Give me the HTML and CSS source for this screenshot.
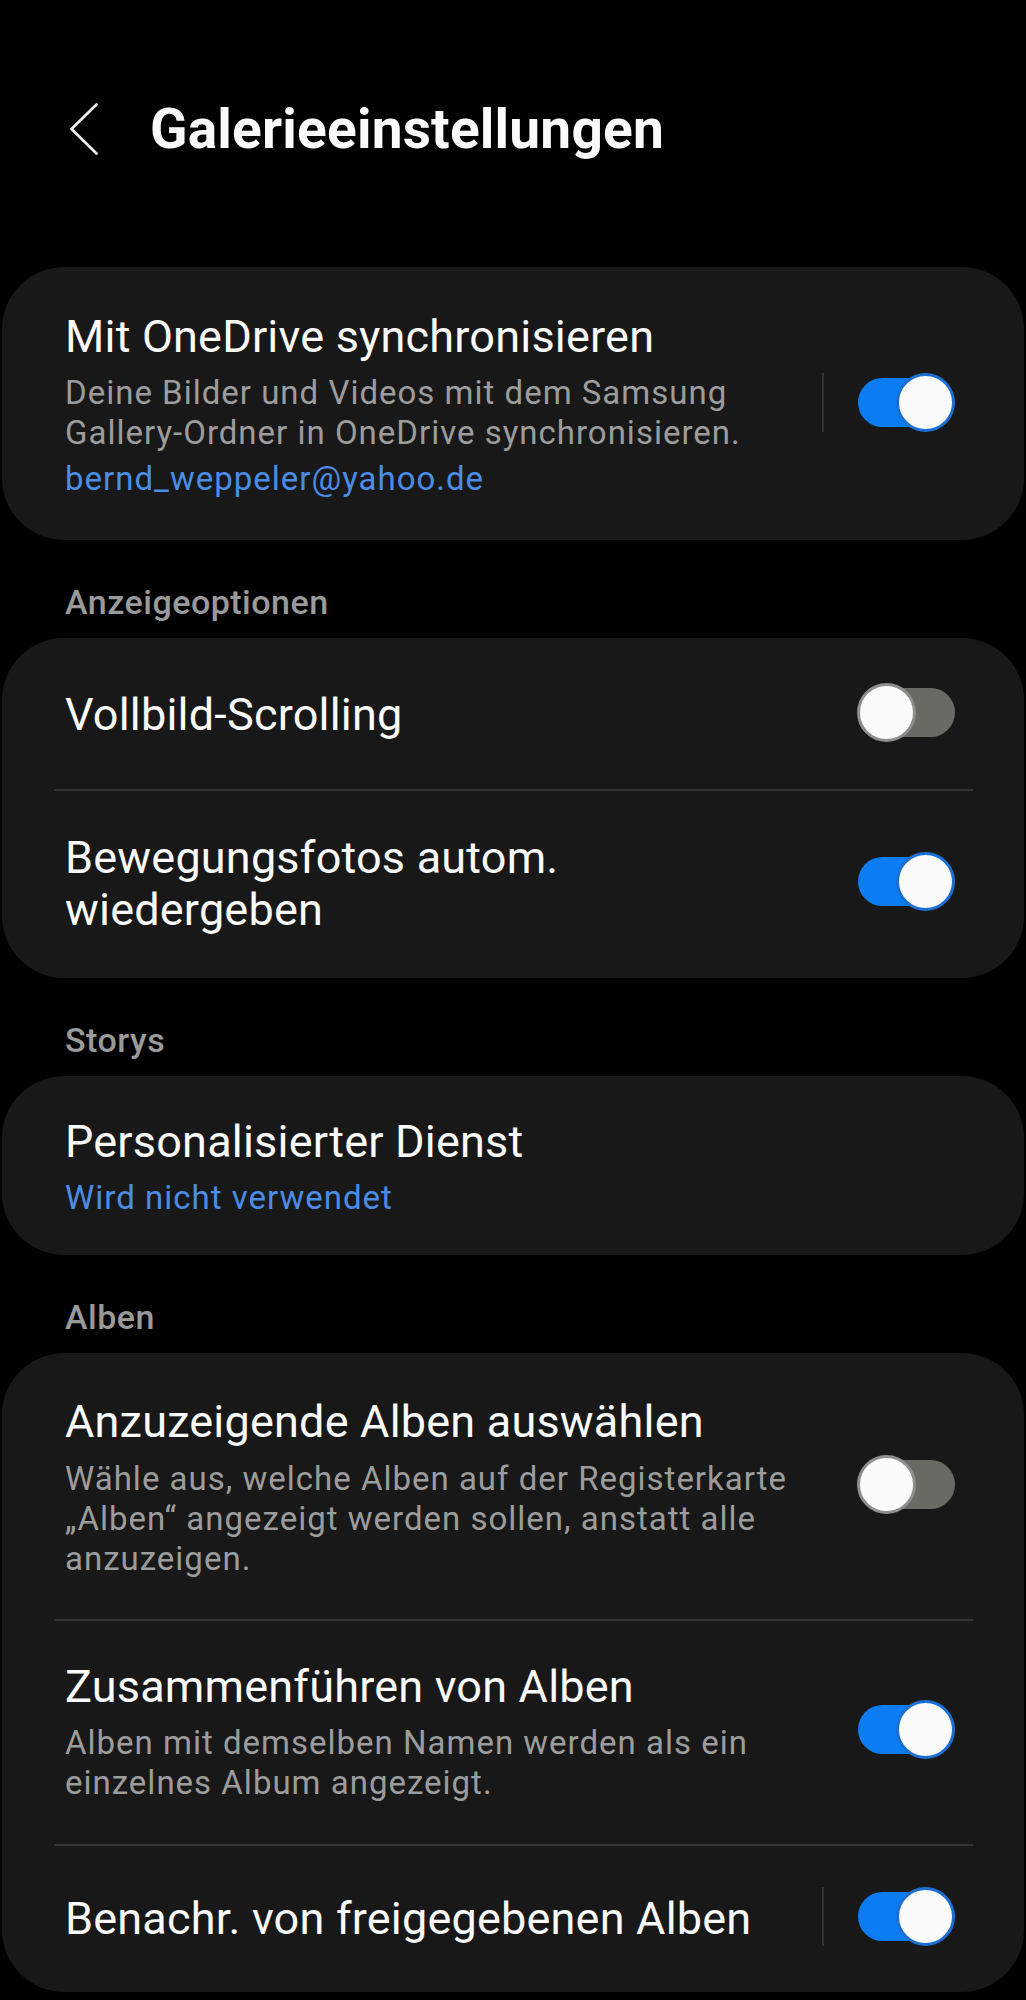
FILE: index.html
```html
<!DOCTYPE html>
<html lang="de">
<head>
<meta charset="utf-8">
<title>Galerieeinstellungen</title>
<link rel="stylesheet" href="styles.css">
</head>
<body>
<div class="screen">
  <header class="appbar">
    <svg class="back" width="28" height="52" viewBox="0 0 28 52" aria-hidden="true">
      <polyline points="26.5,1.5 1.5,26 26.5,50.5" fill="none" stroke="#f2f2f2" stroke-width="2.6" stroke-linecap="round" stroke-linejoin="round"/>
    </svg>
    <h1 class="page-title">Galerieeinstellungen</h1>
  </header>

  <section class="card">
    <div class="row has-sep row-sync">
      <div class="text">
        <div class="title">Mit OneDrive synchronisieren</div>
        <div class="sub">Deine Bilder und Videos mit dem Samsung<br>Gallery-Ordner in OneDrive synchronisieren.</div>
        <div class="link link-email">bernd_weppeler@yahoo.de</div>
      </div>
      <div class="sep"></div>
      <div class="toggle on"><span class="track"></span><span class="thumb"></span></div>
    </div>
  </section>

  <h2 class="group">Anzeigeoptionen</h2>
  <section class="card">
    <div class="row row-a1">
      <div class="text"><div class="title">Vollbild-Scrolling</div></div>
      <div class="toggle off"><span class="track"></span><span class="thumb"></span></div>
    </div>
    <div class="divider"></div>
    <div class="row row-a2">
      <div class="text"><div class="title">Bewegungsfotos autom.<br>wiedergeben</div></div>
      <div class="toggle on"><span class="track"></span><span class="thumb"></span></div>
    </div>
  </section>

  <h2 class="group">Storys</h2>
  <section class="card">
    <div class="row row-s1">
      <div class="text">
        <div class="title">Personalisierter Dienst</div>
        <div class="link">Wird nicht verwendet</div>
      </div>
    </div>
  </section>

  <h2 class="group">Alben</h2>
  <section class="card">
    <div class="row row-b1">
      <div class="text">
        <div class="title">Anzuzeigende Alben auswählen</div>
        <div class="sub sub-b1">Wähle aus, welche Alben auf der Registerkarte<br>„Alben“ angezeigt werden sollen, anstatt alle<br>anzuzeigen.</div>
      </div>
      <div class="toggle off"><span class="track"></span><span class="thumb"></span></div>
    </div>
    <div class="divider"></div>
    <div class="row row-b2">
      <div class="text">
        <div class="title">Zusammenführen von Alben</div>
        <div class="sub">Alben mit demselben Namen werden als ein<br>einzelnes Album angezeigt.</div>
      </div>
      <div class="toggle on"><span class="track"></span><span class="thumb"></span></div>
    </div>
    <div class="divider"></div>
    <div class="row has-sep row-b3">
      <div class="text"><div class="title">Benachr. von freigegebenen Alben</div></div>
      <div class="sep"></div>
      <div class="toggle on"><span class="track"></span><span class="thumb"></span></div>
    </div>
  </section>
</div>
</body>
</html>
```

FILE: styles.css
```css
html, body {
  margin: 0;
  padding: 0;
  background: #000;
}

body {
  font-family: Roboto, "Noto Sans", "Liberation Sans", sans-serif;
  color: #fafafa;
}

.screen {
  width: 1026px;
  padding-bottom: 20px;
}

/* App bar */
.appbar {
  display: flex;
  align-items: center;
  height: 90px;
  margin-top: 84px;
  padding-left: 70px;
}

.back {
  display: block;
  flex: none;
}

.page-title {
  margin: 0 0 0 52px;
  font-size: 55px;
  line-height: 66px;
  font-weight: 700;
  letter-spacing: 0.2px;
  color: #fafafa;
}

/* Cards */
.card {
  margin: 93px 2px 0;
  background: #181818;
  border-radius: 62px;
}

.group + .card {
  margin-top: 0;
}

.group {
  margin: 42px 0 16px;
  padding-left: 65px;
  font-size: 34px;
  line-height: 40px;
  font-weight: 500;
  letter-spacing: 0.5px;
  color: #9a9a9a;
}

.row {
  display: flex;
  align-items: center;
  padding: 40px 69px 40px 63px;
}

.text {
  flex: 1;
  min-width: 0;
  margin-right: 57px;
}

.row.has-sep .text {
  margin-right: 21px;
}

.title {
  font-size: 45px;
  line-height: 52px;
  letter-spacing: 0.2px;
  color: #fafafa;
  white-space: nowrap;
}

.sub {
  margin-top: 10px;
  font-size: 33px;
  line-height: 40px;
  letter-spacing: 1px;
  color: #9c9c9c;
  white-space: nowrap;
}

.link {
  margin-top: 10px;
  font-size: 33px;
  line-height: 40px;
  letter-spacing: 1px;
  color: #4b8de4;
  white-space: nowrap;
}

.link-email {
  margin-top: 6px;
}

.sub-b1 {
  margin-top: 11px;
}

/* per-row vertical padding */
.row-sync { padding-top: 44px; padding-bottom: 41px; }
.row-a1   { padding-top: 51px; padding-bottom: 48px; }
.row-a2   { padding-top: 41px; padding-bottom: 42px; }
.row-s1   { padding-top: 40px; padding-bottom: 37px; }
.row-b1   { padding-top: 43px; padding-bottom: 40px; }
.row-b2   { padding-top: 40px; padding-bottom: 41px; }
.row-b3   { padding-top: 47px; padding-bottom: 47px; }

.divider {
  height: 2px;
  margin: 0 51px 0 52px;
  background: #333333;
}

.sep {
  flex: none;
  width: 2px;
  height: 59px;
  margin: -7px 33px -1px 0;
  background: #343434;
}

/* Switch */
.toggle {
  position: relative;
  flex: none;
  width: 98px;
  height: 59px;
  margin: -7px 0 -1px;
}

.toggle .track {
  position: absolute;
  top: 5px;
  height: 49px;
  border-radius: 25px;
}

.toggle .thumb {
  position: absolute;
  top: 0;
  box-sizing: border-box;
  width: 59px;
  height: 59px;
  border-radius: 50%;
  background: #fbfbfb;
}

.toggle.on .track {
  left: 1px;
  right: 6px;
  background: #0b7cf2;
}

.toggle.on .thumb {
  right: 0;
  border: 3px solid #1c6fd2;
}

.toggle.off .track {
  left: 6px;
  right: 0;
  background: #6a6a65;
}

.toggle.off .thumb {
  left: 0;
  border: 3px solid #8e8e8e;
}
```
